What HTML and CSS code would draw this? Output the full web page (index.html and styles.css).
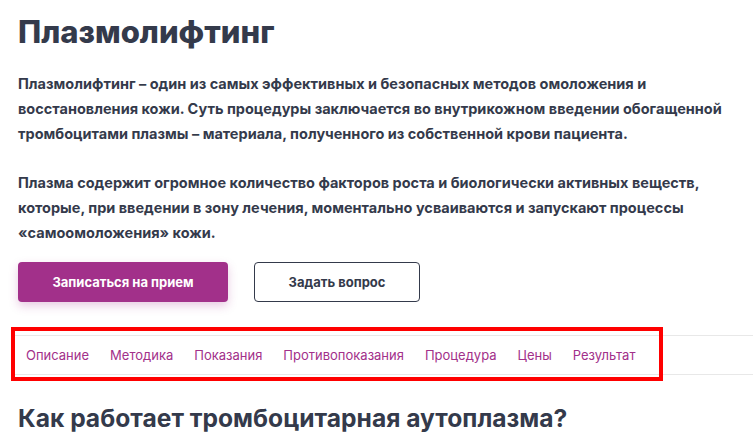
FILE: index.html
```html
<!DOCTYPE html>
<html lang="ru">
<head>
    <meta charset="UTF-8">
    <meta name="viewport" content="width=device-width, initial-scale=1.0">
    <title>Плазмолифтинг</title>
    <link rel="stylesheet" href="styles.css">
</head>
<body>
<div class="page">
    <h1 class="title">Плазмолифтинг</h1>

    <div class="intro">
        <p>Плазмолифтинг – один из самых эффективных и безопасных методов омоложения и восстановления кожи. Суть процедуры заключается во внутрикожном введении обогащенной тромбоцитами плазмы – материала, полученного из собственной крови пациента.</p>
        <p>Плазма содержит огромное количество факторов роста и биологически активных веществ, которые, при введении в зону лечения, моментально усваиваются и запускают процессы «самоомоложения» кожи.</p>
    </div>

    <div class="actions">
        <a class="btn btn-primary">Записаться на прием</a>
        <a class="btn btn-outline">Задать вопрос</a>
    </div>
</div>

<!-- навигация по разделам -->
<div class="tabs-wrap">
    <nav class="tabs">
        <a class="tab">Описание</a>
        <a class="tab">Методика</a>
        <a class="tab">Показания</a>
        <a class="tab">Противопоказания</a>
        <a class="tab">Процедура</a>
        <a class="tab">Цены</a>
        <a class="tab">Результат</a>
    </nav>
    <div class="highlight"></div>
</div>

<div class="page">
    <h2 class="subtitle">Как работает тромбоцитарная аутоплазма?</h2>
</div>
</body>
</html>
```

FILE: styles.css
```css
* {
    margin: 0;
    padding: 0;
    box-sizing: border-box;
}
body {
    font-family: Inter, "Noto Sans", sans-serif;
    color: #343a4b;
    background: #fff;
    overflow: hidden;
}
.page {
    padding: 0 18px;
}
.title {
    font-size: 31px;
    font-weight: 800;
    line-height: 40px;
    padding-top: 12px;
}
.intro {
    padding-top: 19px;
    width: 730px;
}
.intro p {
    font-size: 14.5px;
    font-weight: 700;
    line-height: 25px;
    margin-bottom: 24px;
}
.intro p:last-child {
    margin-bottom: 17px;
}
.actions {
    display: flex;
    gap: 26px;
}
.btn {
    display: flex;
    align-items: center;
    justify-content: center;
    height: 40px;
    border-radius: 4px;
    font-size: 13px;
    font-weight: 700;
    cursor: pointer;
}
.btn-primary {
    width: 210px;
    background: #a2308a;
    color: #fff;
    box-shadow: 0 4px 10px rgba(162, 48, 138, 0.25);
}
.btn-outline {
    width: 166px;
    border: 1px solid #343a4b;
    color: #343a4b;
}

.tabs-wrap {
    position: relative;
    margin-top: 33px;
    padding-left: 12px;
}
.tabs {
    display: flex;
    gap: 21px;
    height: 40px;
    align-items: center;
    padding-left: 14px;
    border-top: 1px solid #e8e8e8;
    border-bottom: 1px solid #e8e8e8;
}
.tab {
    font-size: 13px;
    color: #a2308a;
    white-space: nowrap;
    cursor: pointer;
}
/* красная рамка поверх меню */
.highlight {
    position: absolute;
    left: 11px;
    top: -8px;
    width: 652px;
    height: 54px;
    border: 4px solid #ff0000;
}
.subtitle {
    font-size: 24.6px;
    font-weight: 700;
    line-height: 30px;
    padding-top: 28px;
}
```
